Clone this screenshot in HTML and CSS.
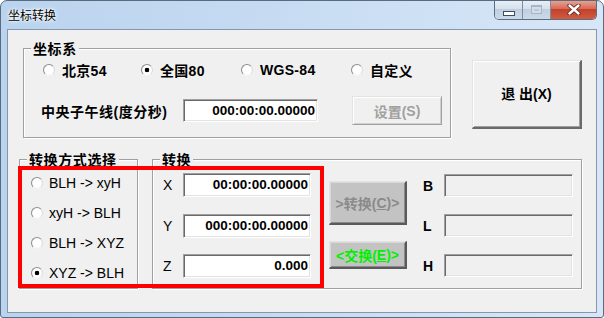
FILE: index.html
```html
<!DOCTYPE html>
<html lang="zh-CN">
<head>
<meta charset="utf-8">
<title>坐标转换</title>
<link rel="stylesheet" href="styles.css">
</head>
<body>
<div class="window">
  <div class="titlebar">
    <span class="title">坐标转换</span>
    <div class="caption-btns">
      <span class="cb cb-min"><i class="min-glyph"></i></span>
      <span class="cb cb-max"><i class="max-glyph"></i></span>
      <span class="cb cb-close">
        <svg width="14" height="11" viewBox="0 0 14 11">
          <path d="M2.5 1.5 L11.5 9.5 M11.5 1.5 L2.5 9.5" stroke="#5a2a24" stroke-width="4.2" stroke-linecap="round" fill="none"/>
          <path d="M2.5 1.5 L11.5 9.5 M11.5 1.5 L2.5 9.5" stroke="#ffffff" stroke-width="2.4" stroke-linecap="round" fill="none"/>
        </svg>
      </span>
    </div>
  </div>
  <div class="client">
    <div class="row-top">
      <fieldset class="group group-coord">
        <legend>坐标系</legend>
        <div class="coord-body">
          <div class="radio-row">
            <span class="opt opt-a"><span class="radio"></span>北京54</span>
            <span class="opt opt-b"><span class="radio on"></span>全国80</span>
            <span class="opt opt-c"><span class="radio"></span>WGS-84</span>
            <span class="opt"><span class="radio"></span>自定义</span>
          </div>
          <div class="meridian-row">
            <span class="meridian-label">中央子午线(度分秒)</span>
            <span class="field field-meridian">000:00:00.00000</span>
            <span class="btn btn-set">设置(<u>S</u>)</span>
          </div>
        </div>
      </fieldset>
      <span class="btn btn-exit">退 出(X)</span>
    </div>
    <div class="row-bottom">
      <fieldset class="group group-mode">
        <legend>转换方式选择</legend>
        <div class="mode-body">
          <div class="mode-opt"><span class="radio"></span>BLH -&gt; xyH</div>
          <div class="mode-opt"><span class="radio"></span>xyH -&gt; BLH</div>
          <div class="mode-opt"><span class="radio"></span>BLH -&gt; XYZ</div>
          <div class="mode-opt"><span class="radio on"></span>XYZ -&gt; BLH</div>
        </div>
      </fieldset>
      <fieldset class="group group-conv">
        <legend>转换</legend>
        <div class="conv-body">
          <div class="col-in">
            <div class="io-row"><span class="axis">X</span><span class="field field-in">00:00:00.00000</span></div>
            <div class="io-row"><span class="axis">Y</span><span class="field field-in">000:00:00.00000</span></div>
            <div class="io-row"><span class="axis">Z</span><span class="field field-in">0.000</span></div>
          </div>
          <div class="col-btn">
            <span class="btn btn-gray btn-conv">&gt;转换(<u>C</u>)&gt;</span>
            <span class="btn btn-gray btn-swap">&lt;交换(<u>E</u>)&gt;</span>
          </div>
          <div class="col-out">
            <div class="io-row"><span class="axis axis-b">B</span><span class="field field-out"></span></div>
            <div class="io-row"><span class="axis axis-b">L</span><span class="field field-out"></span></div>
            <div class="io-row"><span class="axis axis-b">H</span><span class="field field-out"></span></div>
          </div>
        </div>
      </fieldset>
    </div>
    <div class="highlight"></div>
  </div>
</div>
</body>
</html>
```
FILE: styles.css
```css
* { box-sizing: border-box; }
html, body { margin: 0; padding: 0; }
body {
  width: 604px;
  height: 318px;
  overflow: hidden;
  background: #ffffff;
  font-family: "Liberation Sans", "Noto Sans CJK SC", sans-serif;
  font-size: 14px;
  color: #000;
}

.window {
  width: 604px;
  height: 318px;
  border: 1px solid #5b6b7e;
  border-radius: 7px 7px 3px 3px;
  background: linear-gradient(to right, #bad3ee 0%, #c6dbf2 45%, #d8e7f7 100%);
  display: flex;
  flex-direction: column;
  overflow: hidden;
}

.titlebar {
  height: 28px;
  display: flex;
  align-items: flex-start;
  padding-left: 7px;
  flex: none;
}
.title {
  font-family: "Noto Sans CJK SC", sans-serif;
  font-size: 12px;
  line-height: 16px;
  margin-top: 6px;
  text-shadow: 0 0 5px #ffffff, 0 0 3px #ffffff, 0 0 2px #ffffff;
}
.caption-btns {
  margin-left: auto;
  margin-right: 6px;
  margin-top: -1px;
  display: flex;
  height: 20px;
  border: 1px solid #5d6d80;
  border-top: none;
  border-radius: 0 0 5px 5px;
  overflow: hidden;
}
.cb {
  height: 19px;
  display: flex;
  align-items: center;
  justify-content: center;
}
.cb-min, .cb-max {
  width: 28px;
  border-right: 1px solid #7d8c9e;
  background: linear-gradient(#e9f0f8, #d6e1ee 45%, #bfcfe1 50%, #cbdaeb);
}
.cb-close {
  width: 45px;
  background: linear-gradient(#eaa898, #d76c57 45%, #c4412c 50%, #d05b42);
}
.min-glyph {
  width: 12px;
  height: 5px;
  margin-top: 7px;
  background: #ffffff;
  border: 1px solid #3f4c5d;
}
.max-glyph {
  width: 11px;
  height: 9px;
  border: 1px solid #aab5c3;
  border-top-width: 2px;
  box-shadow: inset 0 0 0 2px #d3dde9;
  background: #bcc8d6;
}

.client {
  margin: 0 6px;
  height: 284px;
  flex: none;
  border: 1px solid #8597ad;
  background: #f0f0f0;
  position: relative;
  padding-top: 10px;
}

.group {
  margin: 0;
  padding: 0;
  border: 1px solid #a0a0a0;
  box-shadow: inset 1px 1px 0 #ffffff, 1px 1px 0 #ffffff;
  min-width: 0;
}
.group legend {
  margin-left: 7px;
  padding: 0 2px;
  background: #f0f0f0;
  font-family: "Noto Sans CJK SC", sans-serif;
  font-weight: bold;
  font-size: 14px;
  line-height: 16px;
  letter-spacing: 0.6px;
}

.row-top {
  display: flex;
  align-items: flex-start;
  margin-left: 15px;
}
.group-coord { width: 428px; }
.coord-body { padding: 6px 0 12px 17px; }
.radio-row {
  display: flex;
  align-items: center;
  height: 16px;
  padding-left: 2px;
}
.opt {
  display: flex;
  align-items: center;
  font-weight: bold;
  white-space: nowrap;
  letter-spacing: 0.3px;
}
.opt-a { width: 98px; }
.opt-b { width: 100px; }
.opt-c { width: 110px; }

.radio {
  flex: none;
  width: 12px;
  height: 12px;
  border-radius: 50%;
  border: 1px solid;
  border-color: #8e8e8e #dcdcdc #f4f4f4 #8e8e8e;
  background: radial-gradient(circle, #ffffff 55%, #ececec 100%);
  margin-right: 7px;
}
.radio.on {
  background: radial-gradient(circle, #000000 0 2px, #ffffff 2.6px, #ffffff 55%, #ececec 100%);
}

.meridian-row {
  display: flex;
  align-items: center;
  margin-top: 18px;
  height: 29px;
}
.meridian-label {
  width: 142px;
  font-weight: bold;
  letter-spacing: 0.5px;
  white-space: nowrap;
}

.field {
  display: block;
  flex: none;
  background: #ffffff;
  border: 1px solid;
  border-color: #a0a0a0 #ffffff #ffffff #a0a0a0;
  box-shadow: inset 1px 1px 0 #696969, inset -1px -1px 0 #e3e3e3;
  text-align: right;
  font-weight: bold;
  font-size: 13.5px;
  padding-right: 2px;
  white-space: nowrap;
}
.field-meridian {
  width: 135px;
  height: 23px;
  line-height: 21px;
}

.btn {
  display: flex;
  align-items: center;
  justify-content: center;
  flex: none;
  border: 1px solid;
  border-color: #e3e3e3 #696969 #696969 #e3e3e3;
  box-shadow: inset 1px 1px 0 #ffffff, inset -1px -1px 0 #a0a0a0;
  font-family: "Liberation Sans", "Noto Sans CJK SC", sans-serif;
  font-weight: bold;
  font-size: 14px;
  white-space: nowrap;
}
.btn u { text-decoration: underline; text-underline-offset: 1px; }
.btn-set {
  margin-left: 34px;
  width: 90px;
  height: 29px;
  background: #f0f0f0;
  color: #a0a0a0;
  border-color: #e3e3e3 #a0a0a0 #a0a0a0 #e3e3e3;
  box-shadow: inset 1px 1px 0 #ffffff, inset -1px -1px 0 #d0d0d0;
}
.btn-set u { text-decoration: none; }
.btn-exit {
  margin-left: 21px;
  margin-top: 20px;
  width: 110px;
  height: 69px;
  background: #f0f0f0;
  border-width: 1px 2px 2px 1px;
  padding-bottom: 2px;
}

.row-bottom {
  display: flex;
  margin-top: 13px;
  margin-left: 11px;
}
.group-mode { width: 119px; }
.mode-body { padding: 1px 0 0 11px; }
.mode-opt {
  height: 30px;
  display: flex;
  align-items: center;
  white-space: nowrap;
}
.mode-opt .radio { margin-right: 6px; }

.group-conv { width: 430px; margin-left: 14px; }
.conv-body {
  display: flex;
  padding: 6px 8px 9px 10px;
}
.col-in {
  display: flex;
  flex-direction: column;
  gap: 16.5px;
}
.io-row {
  display: flex;
  align-items: center;
}
.axis { width: 20px; flex: none; }
.axis-b { width: 21px; font-weight: bold; }
.field-in {
  width: 128px;
  height: 24px;
  line-height: 22px;
}
.col-btn {
  margin-left: 18px;
  padding-top: 8px;
  display: flex;
  flex-direction: column;
  gap: 16px;
}
.btn-gray {
  width: 78px;
  background: #c3c3c3;
  border-width: 1px 2px 2px 1px;
  border-color: #e3e3e3 #5a5a5a #5a5a5a #e3e3e3;
  box-shadow: inset 1px 1px 0 #d8d8d8, inset -1px -1px 0 #8a8a8a;
}
.btn-conv {
  height: 44px;
  color: #8a8a8a;
}
.btn-swap {
  height: 28px;
  color: #00f000;
}
.col-out {
  margin-left: 16px;
  padding-top: 1px;
  display: flex;
  flex-direction: column;
  gap: 17px;
}
.field-out {
  width: 129px;
  height: 23px;
  background: #f0f0f0;
}

.highlight {
  position: absolute;
  left: 10px;
  top: 136px;
  width: 306px;
  height: 122px;
  border: 4px solid #ff0000;
  pointer-events: none;
}
```
